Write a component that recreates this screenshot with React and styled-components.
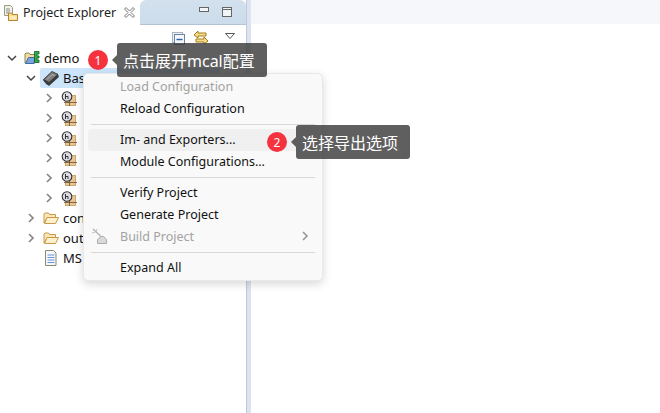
import React from 'react';
import styled, { createGlobalStyle } from 'styled-components';

const GlobalStyle = createGlobalStyle`
  html, body {
    margin: 0;
    padding: 0;
    background: #fff;
    overflow: hidden;
  }

  * {
    box-sizing: border-box;
  }

  #root {
    height: 413px;
  }
`;

const Page = styled.div`
  position: relative;
  display: flex;
  width: 660px;
  height: 413px;
  font-family: 'Noto Sans', 'Noto Sans CJK SC', sans-serif;
  color: #111;
`;

const Explorer = styled.div`
  display: flex;
  flex-direction: column;
  width: 247px;
  border-right: 1px solid #c3c9d3;
  overflow: hidden;
`;

const Divider = styled.div`
  width: 4px;
  background: #dde3f0;
`;

const TabBar = styled.div`
  display: flex;
  height: 25px;
`;

const Tab = styled.div`
  display: flex;
  align-items: center;
  gap: 4px;
  width: 140px;
  padding-left: 3px;
  font-size: 12.5px;
  color: #222;
`;

const CloseMark = styled.span`
  display: flex;
  margin-left: 4px;
`;

const ViewControls = styled.div`
  display: flex;
  flex: 1;
  justify-content: flex-end;
  align-items: flex-start;
  gap: 13px;
  padding: 7px 14px 0 0;
  background: linear-gradient(#d3e1ee, #ccdcea);
  border-bottom: 1px solid #b3c3d3;
  border-radius: 6px 6px 0 0;
`;

const Toolbar = styled.div`
  display: flex;
  justify-content: flex-end;
  align-items: center;
  gap: 8px;
  height: 23px;
  padding: 3px 11px 0 0;
`;

const DropdownSlot = styled.span`
  display: flex;
  margin-left: 8px;
`;

const Tree = styled.div`
  display: flex;
  flex-direction: column;
`;

const Row = styled.div`
  display: flex;
  align-items: center;
  gap: 4px;
  height: 20px;
  padding-left: ${(p) => p.$indent}px;
  font-size: 13px;
  white-space: nowrap;
`;

const SelectedLabel = styled.div`
  display: flex;
  align-items: center;
  gap: 4px;
  flex: none;
  width: 180px;
  height: 20px;
  margin-left: -3px;
  padding-left: 3px;
  background: #cce5fb;
  border-radius: 2px;
`;

const Twist = styled.span`
  display: flex;
  justify-content: center;
  width: 16px;
  flex: none;
`;

const Editor = styled.div`
  flex: 1;
`;

const EditorTop = styled.div`
  height: 24px;
  background: #f5f7fb;
`;

const Menu = styled.div`
  position: absolute;
  left: 83px;
  top: 73px;
  width: 240px;
  height: 208px;
  padding: 2px 4px;
  background: #f9f9f9;
  border: 1px solid #e8e8e8;
  border-radius: 5px;
  box-shadow: 0 3px 10px rgba(0, 0, 0, 0.16);
`;

const MenuItem = styled.div`
  position: relative;
  display: flex;
  align-items: center;
  justify-content: space-between;
  height: 22px;
  padding: 0 8px 2px 32px;
  background: ${(p) => (p.$active ? '#f0f0f0' : 'transparent')};
  border-radius: 4px;
  font-size: 12.5px;
  color: ${(p) => (p.$disabled ? '#a2a2a2' : '#111')};
`;

const MenuIcon = styled.span`
  position: absolute;
  left: 3px;
  top: 2px;
  display: flex;
`;

const Separator = styled.div`
  height: 1px;
  margin: 4px 3px;
  background: #d8d8d8;
`;

const Callout = styled.div`
  position: absolute;
  left: ${(p) => p.$x}px;
  top: ${(p) => p.$y}px;
  display: flex;
  align-items: center;
`;

const Badge = styled.span`
  display: flex;
  align-items: center;
  justify-content: center;
  width: 20px;
  height: 20px;
  border-radius: 50%;
  background: #f5333f;
  color: #fff;
  font-size: 12px;
`;

const Bubble = styled.div`
  position: relative;
  display: flex;
  align-items: center;
  height: 34px;
  margin-left: 9px;
  padding: 0 12px 0 6px;
  background: rgba(60, 60, 60, 0.82);
  border-radius: 3px;
  color: #fff;
  font-size: 16px;
  white-space: nowrap;

  &::before {
    content: '';
    position: absolute;
    left: -5px;
    top: 12px;
    border-style: solid;
    border-width: 5px 5px 5px 0;
    border-color: transparent rgba(60, 60, 60, 0.82) transparent transparent;
  }
`;

const Chevron = ({ open, color = '#888' }) => (
  <svg width="10" height="10" viewBox="0 0 10 10" fill="none" stroke={color} strokeWidth={open ? 1.5 : 1.7}>
    <path d={open ? 'M1 3l4 4 4-4' : 'M3 1l4 4-4 4'} />
  </svg>
);

const FolderIcon = () => (
  <svg width="16" height="16" viewBox="0 0 16 16">
    <path d="M1 13V4l1-1h3.500l1 1.500h6V8H4L1 13z" fill="#fbe7b6" stroke="#c9994a" />
    <path d="M1.500 13.500L4 7.500h11.500l-3 6z" fill="#fdf0cc" stroke="#c9994a" />
  </svg>
);

const TabIcon = () => (
  <svg width="16" height="16" viewBox="0 0 16 16">
    <path d="M1.500 0.500h6l2 2v8h-8z" fill="#f1f1ea" stroke="#9a9a80" />
    <path d="M3 4h4M3 6h4M3 8h3" stroke="#8d8d8d" />
    <path d="M5.500 15.500V8h3l1 1.500h5v6z" fill="#f8d98e" stroke="#b3862d" />
    <path d="M6.500 14.500V11h7v3.500z" fill="#fce9b8" />
  </svg>
);

const CloseIcon = () => (
  <svg width="11" height="11" viewBox="0 0 11 11" fill="#fff" stroke="#777">
    <path d="M2 0.500L5.500 4 9 0.500l1.500 1.500L7 5.500 10.500 9 9 10.500 5.500 7 2 10.500 0.500 9 4 5.500 0.500 2z" />
  </svg>
);

const ProjectIcon = () => (
  <svg width="16" height="16" viewBox="0 0 16 16">
    <path d="M1 13V4l1-1h3l1 1.500h5V13z" fill="#f4dc9c" stroke="#8a8a5a" />
    <path d="M1.500 13.500l3-6H11l-1 6z" fill="#7aa5dd" stroke="#3f6aa8" />
    <path d="M10.500 1.500h4.500v2.500h-2v2h2v2h-2v2h2v2.500h-4.500z" fill="#2fae4e" stroke="#0e5a22" strokeWidth="0.8" />
  </svg>
);

const ChipIcon = () => (
  <svg width="16" height="16" viewBox="0 0 16 16">
    <path d="M0.500 10l2.500 3.500 3 2 9.500-8.500-1-3z" fill="#3c3c3c" stroke="#2c2c2c" strokeWidth="0.7" />
    <path d="M0.500 9.500L9 1.500l6 3-9 8z" fill="#7c7c7c" stroke="#333" strokeWidth="0.9" />
    <path d="M4 9.500l5-5 2.500 1" fill="none" stroke="#b9b9b9" />
  </svg>
);

const ModuleIcon = () => (
  <svg width="16" height="16" viewBox="0 0 16 16">
    <rect x="4.500" y="5.500" width="10" height="10" fill="#e9c591" stroke="#c29a5f" strokeWidth="0.8" />
    <path d="M8.500 3v13M3 12.500h13" stroke="#6b5230" strokeWidth="0.8" />
    <circle cx="6" cy="6.500" r="4.800" fill="#dcdce6" stroke="#333" strokeWidth="1.100" />
    <path d="M4.500 9V4M4.500 6.500h2.500V9" fill="none" stroke="#333" />
  </svg>
);

const FileIcon = () => (
  <svg width="16" height="16" viewBox="0 0 16 16">
    <path d="M2.500 0.500h8l2.500 2.500v12.500H2.500z" fill="#f4f7fd" stroke="#8a8a6a" />
    <path d="M4.500 5h7M4.500 7.500h7M4.500 10h7M4.500 12.500h7" stroke="#6d96d8" />
  </svg>
);

const BuildIcon = () => (
  <svg width="18" height="16" viewBox="0 0 18 16" fill="none">
    <path d="M2 1l8 7.500" stroke="#b5b5b5" strokeWidth="1.500" />
    <path d="M1 5l3-1M6 1l-1 3" stroke="#c4c4c4" />
    <path d="M6.500 11.500l4-3h2l3 3v4h-9z" fill="#dadada" stroke="#aaa" />
  </svg>
);

const MinimizeIcon = () => (
  <svg width="10" height="5" viewBox="0 0 10 5">
    <rect x="0.500" y="0.500" width="9" height="4" fill="#f3f6f9" stroke="#666" />
  </svg>
);

const MaximizeIcon = () => (
  <svg width="10" height="10" viewBox="0 0 10 10">
    <rect x="0.500" y="0.500" width="9" height="9" fill="#f3f6f9" stroke="#666" />
    <path d="M0 2.500h10" stroke="#666" />
  </svg>
);

const CollapseIcon = () => (
  <svg width="13" height="13" viewBox="0 0 13 13">
    <rect x="0.500" y="0.500" width="10" height="10" fill="#eef2f7" stroke="#a6b3c4" />
    <rect x="2.500" y="2.500" width="10" height="10" fill="#f4f7fb" stroke="#6f8299" />
    <path d="M4.500 7.500h6" stroke="#2a62a8" strokeWidth="1.400" />
  </svg>
);

const LinkIcon = () => (
  <svg width="16" height="16" viewBox="0 0 16 16" fill="#f6dc8e" stroke="#a97c12">
    <path d="M1 5l4-4v2h8v3H5v2z" />
    <path d="M15 11l-4-4v2H3v3h8v2z" />
  </svg>
);

const DropdownIcon = () => (
  <svg width="10" height="11" viewBox="0 0 10 11">
    <path d="M0.500 0.500h9L5 5.500z" fill="#fff" stroke="#555" />
  </svg>
);

const moduleRows = [0, 1, 2, 3, 4, 5];

const App = () => {
  return (
    <>
      <GlobalStyle />
      <Page>
        <Explorer>
          <TabBar>
            <Tab>
              <TabIcon />
              Project Explorer
              <CloseMark><CloseIcon /></CloseMark>
            </Tab>
            <ViewControls>
              <MinimizeIcon />
              <MaximizeIcon />
            </ViewControls>
          </TabBar>
          <Toolbar>
            <CollapseIcon />
            <LinkIcon />
            <DropdownSlot><DropdownIcon /></DropdownSlot>
          </Toolbar>
          <Tree>
            <Row $indent={4}>
              <Twist><Chevron open color="#444" /></Twist>
              <ProjectIcon />
              demo
            </Row>
            <Row $indent={23}>
              <Twist><Chevron open color="#444" /></Twist>
              <SelectedLabel>
                <ChipIcon />
                Bas
              </SelectedLabel>
            </Row>
            {moduleRows.map((id) => (
              <Row key={id} $indent={41}>
                <Twist><Chevron /></Twist>
                <ModuleIcon />
              </Row>
            ))}
            <Row $indent={23}>
              <Twist><Chevron /></Twist>
              <FolderIcon />
              con
            </Row>
            <Row $indent={23}>
              <Twist><Chevron /></Twist>
              <FolderIcon />
              out
            </Row>
            <Row $indent={43}>
              <FileIcon />
              MS
            </Row>
          </Tree>
        </Explorer>
        <Divider />
        <Editor>
          <EditorTop />
        </Editor>

        <Menu>
          <MenuItem $disabled>Load Configuration</MenuItem>
          <MenuItem>Reload Configuration</MenuItem>
          <Separator />
          <MenuItem $active>Im- and Exporters...</MenuItem>
          <MenuItem>Module Configurations...</MenuItem>
          <Separator />
          <MenuItem>Verify Project</MenuItem>
          <MenuItem>Generate Project</MenuItem>
          <MenuItem $disabled>
            <MenuIcon><BuildIcon /></MenuIcon>
            Build Project
            <Chevron color="#999" />
          </MenuItem>
          <Separator />
          <MenuItem>Expand All</MenuItem>
        </Menu>

        <Callout $x={88} $y={43}>
          <Badge>1</Badge>
          <Bubble>点击展开mcal配置</Bubble>
        </Callout>
        <Callout $x={267} $y={125}>
          <Badge>2</Badge>
          <Bubble>选择导出选项</Bubble>
        </Callout>
      </Page>
    </>
  );
};

export default App;
